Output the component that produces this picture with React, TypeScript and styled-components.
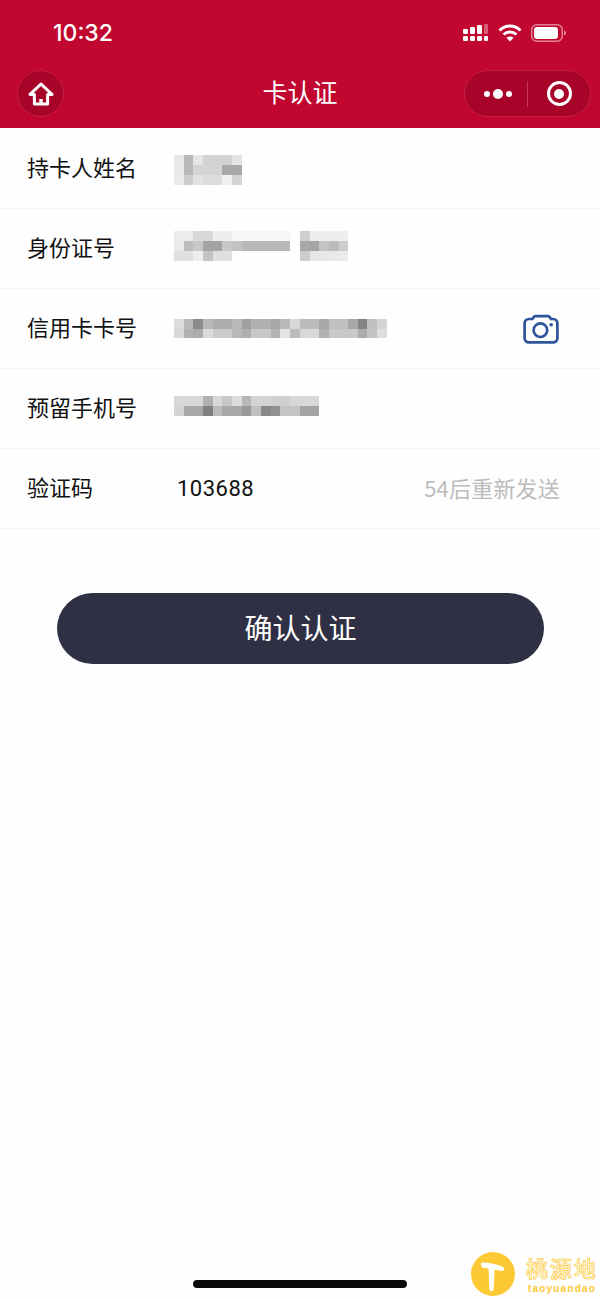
import styled, { createGlobalStyle } from "styled-components";

const GlobalStyle = createGlobalStyle`
  html, body {
    margin: 0;
    padding: 0;
    background: #fff;
  }
  * {
    box-sizing: border-box;
  }
`;

const FONT = `"Noto Sans CJK SC", "Noto Sans", sans-serif`;

type MosaicPart = { cols: string[][] };

// pixelated values, one string per row, two hex digits for each grey cell
const parseRow = (row: string) => row.split(" ").map((v) => `#${v}${v}${v}`);

const nameRows = ["e8 b8 e6 d2 d2 d2 e4", "e8 b8 d4 d4 d4 a8 a8", "ea cc e2 dc dc f0 d4"].map(parseRow);
const idRows = [
  ["ec ec d8 d8 ee ee f6 f6 f6 f6 f6 f6", "d0 ee ee ee ee"],
  ["ea bc c8 a4 a4 c8 c2 b8 b8 b8 b8 b8", "a8 a4 c4 bc cc"],
  ["e0 e0 ee c4 e0 e0 ff ff ff ff ff ff", "cc e6 e6 ea ea"],
];
const cardRows = [
  "dc b8 8c b8 ac ac b8 a0 b0 b0 a8 b8 d8 bc bc a8 c0 c0 a8 84 c0 d4",
  "d8 b0 ac dc cc cc b8 b0 c8 c8 b4 e4 bc d8 d8 b0 c8 c8 c8 ac c4 de",
].map(parseRow);
const phoneRows = [
  "d8 d8 d8 b0 d8 c8 dc b8 d4 d4 d0 d0 d8 d8 d8",
  "d4 a8 a8 80 bc a8 a8 98 c0 88 90 c4 c4 a4 a4",
].map(parseRow);

const fields = [
  { label: "持卡人姓名", parts: [{ cols: nameRows }] as MosaicPart[], nudge: 3 },
  {
    label: "身份证号",
    parts: [
      { cols: idRows.map((r) => parseRow(r[0])) },
      { cols: idRows.map((r) => parseRow(r[1])) },
    ] as MosaicPart[],
    nudge: -5,
  },
  { label: "信用卡卡号", parts: [{ cols: cardRows }] as MosaicPart[], nudge: 0, camera: true },
  { label: "预留手机号", parts: [{ cols: phoneRows }] as MosaicPart[], nudge: -5 },
];

function SignalIcon() {
  return (
    <svg width="26" height="18" viewBox="0 0 26 18" fill="#fff">
      <rect x="0" y="5" width="5" height="5" rx="1.2" />
      <rect x="7" y="3" width="5" height="7" rx="1.2" />
      <rect x="14" y="1" width="5" height="9" rx="1.2" />
      <rect x="21" y="0" width="4" height="10" rx="1" opacity="0.35" />
      <rect x="0" y="12" width="5" height="5" rx="1.2" />
      <rect x="7" y="12" width="5" height="5" rx="1.2" />
      <rect x="14" y="12" width="5" height="5" rx="1.2" />
      <rect x="21" y="12" width="4" height="5" rx="1" />
    </svg>
  );
}

function WifiIcon() {
  return (
    <svg width="24" height="18" viewBox="0 0 24 18" fill="none" stroke="#fff" strokeWidth="3">
      <path d="M1.5 6.5C7.5 0.6 16.5 0.6 22.5 6.5" />
      <path d="M5.5 10.5C9.3 7 14.7 7 18.5 10.5" />
      <path d="M12 17.5L8.4 13.8C10.4 12.2 13.6 12.2 15.6 13.8Z" fill="#fff" stroke="none" />
    </svg>
  );
}

function BatteryIcon() {
  return (
    <svg width="36" height="18" viewBox="0 0 36 18" fill="none">
      <rect x="0.75" y="0.75" width="30.5" height="16.5" rx="5" stroke="#fff" strokeOpacity="0.5" strokeWidth="1.5" />
      <rect x="3" y="3" width="24" height="12" rx="3" fill="#fff" />
      <path d="M33 6.5C34.5 7 35 8 35 9S34.5 11 33 11.5Z" fill="#fff" fillOpacity="0.5" />
    </svg>
  );
}

function HomeIcon() {
  return (
    <svg width="26" height="24" viewBox="0 0 26 24" fill="none" stroke="#fff" strokeWidth="3" strokeLinejoin="round">
      <path d="M13 2L2 12.4H6.4V22H19.6V12.4H24Z" />
      <path d="M13 22V17" strokeWidth="3.4" />
    </svg>
  );
}

function CameraIcon() {
  return (
    <svg width="36" height="30" viewBox="0 0 36 30" fill="none" stroke="#2f559c" strokeWidth="2.7">
      <path d="M6 5H9.4L10.6 3.2C11 2.6 11.6 2.2 12.4 2.2H25C25.8 2.2 26.4 2.6 26.8 3.2L28 5H30C32.6 5 34.4 6.8 34.4 9.4V24C34.4 26.6 32.6 28.4 30 28.4H6C3.4 28.4 1.6 26.6 1.6 24V9.4C1.6 6.8 3.4 5 6 5Z" />
      <circle cx="17.4" cy="16.2" r="6.8" />
      <circle cx="28.2" cy="10.8" r="1.8" fill="#2f559c" stroke="none" />
    </svg>
  );
}

function Mosaic({ parts, nudge }: { parts: MosaicPart[]; nudge: number }) {
  return (
    <MosaicWrap $nudge={nudge}>
      {parts.map((part, i) => (
        <MosaicGrid key={i} $cols={part.cols[0].length}>
          {part.cols.flat().map((c, j) => (
            <MosaicCell key={j} $c={c} />
          ))}
        </MosaicGrid>
      ))}
    </MosaicWrap>
  );
}

export default function App() {
  return (
    <Page>
      <GlobalStyle />
      <Header>
        <StatusBar>
          <Time>10:32</Time>
          <StatusIcons>
            <SignalIcon />
            <WifiIcon />
            <BatteryIcon />
          </StatusIcons>
        </StatusBar>
        <NavBar>
          <HomeButton>
            <HomeIcon />
          </HomeButton>
          <Title>卡认证</Title>
          <Capsule>
            <MoreSide>
              <Dot $size={6} />
              <Dot $size={10} />
              <Dot $size={6} />
            </MoreSide>
            <CapsuleDivider />
            <CloseSide>
              <Target />
            </CloseSide>
          </Capsule>
        </NavBar>
      </Header>

      <Form>
        {fields.map((f) => (
          <Row key={f.label}>
            <Label>{f.label}</Label>
            <Mosaic parts={f.parts} nudge={f.nudge} />
            {f.camera && (
              <CameraSlot>
                <CameraIcon />
              </CameraSlot>
            )}
          </Row>
        ))}
        <Row>
          <Label>验证码</Label>
          <CodeValue>103688</CodeValue>
          <Resend>54后重新发送</Resend>
        </Row>
      </Form>

      <SubmitButton>确认认证</SubmitButton>

      <HomeIndicator />
      <Watermark>
        <WatermarkBadge>
          <svg width="24" height="30" viewBox="0 0 24 30" fill="#fff">
            <path d="M1.5 0.5C8 0.5 16 2 22 5C24 6 23.5 9 21.5 9C19 8.5 16 8 13.5 8C13.5 15 13 22 12.5 27C12.2 30 8.5 30 8.3 27C8 22 8 14 7.5 6.5C5 6 3 6 1.5 5.5C-0.5 4.5 -0.5 1 1.5 0.5Z" />
          </svg>
        </WatermarkBadge>
        <WatermarkText>
          <WatermarkName>桃源地</WatermarkName>
          <WatermarkSub>taoyuandao</WatermarkSub>
        </WatermarkText>
      </Watermark>
    </Page>
  );
}

const Page = styled.div`
  position: relative;
  width: 600px;
  height: 1299px;
  overflow: hidden;
  background: #fefefe;
  font-family: ${FONT};
`;

const Header = styled.header`
  height: 128px;
  background: #c1062f;
  display: flex;
  flex-direction: column;
`;

const StatusBar = styled.div`
  height: 66px;
  display: flex;
  align-items: center;
  justify-content: space-between;
  padding: 0 33px 0 53px;
`;

const Time = styled.span`
  color: #fff;
  font-family: Inter, "Liberation Sans", sans-serif;
  font-size: 23px;
  font-weight: 500;
`;

const StatusIcons = styled.div`
  display: flex;
  align-items: center;
  gap: 9px;
`;

const NavBar = styled.nav`
  flex: 1;
  display: flex;
  align-items: flex-start;
  justify-content: space-between;
  padding: 4px 9px 0 17px;
  position: relative;
`;

const HomeButton = styled.div`
  width: 47px;
  height: 47px;
  border-radius: 50%;
  background: #a8042a;
  border: 1px solid #c91c44;
  display: flex;
  align-items: center;
  justify-content: center;
`;

const Title = styled.h1`
  position: absolute;
  left: 0;
  right: 0;
  top: 6px;
  margin: 0;
  text-align: center;
  color: #fff;
  font-size: 25px;
  line-height: 38px;
  font-weight: 400;
`;

const Capsule = styled.div`
  width: 127px;
  height: 47px;
  border-radius: 24px;
  background: #a8042a;
  border: 1px solid #c91c44;
  display: flex;
  align-items: center;
`;

const MoreSide = styled.div`
  flex: 0 0 62px;
  display: flex;
  align-items: center;
  justify-content: center;
  gap: 3px;
  padding-left: 3px;
`;

const CloseSide = styled.div`
  flex: 1;
  display: flex;
  justify-content: center;
`;

const CapsuleDivider = styled.div`
  width: 1px;
  height: 26px;
  background: #c8385a;
`;

const Dot = styled.span<{ $size: number }>`
  width: ${(p) => p.$size}px;
  height: ${(p) => p.$size}px;
  border-radius: 50%;
  background: #fff;
`;

const Target = styled.span`
  width: 25px;
  height: 25px;
  border-radius: 50%;
  border: 3px solid #fff;
  display: flex;
  align-items: center;
  justify-content: center;

  &::after {
    content: "";
    width: 10px;
    height: 10px;
    border-radius: 50%;
    background: #fff;
  }
`;

const Form = styled.section`
  display: flex;
  flex-direction: column;
  padding-top: 1px;
`;

const Row = styled.div`
  height: 80px;
  padding: 0 40px 0 27px;
  display: flex;
  align-items: center;
  border-bottom: 1px solid #f6f6f6;
`;

const Label = styled.span`
  width: 147px;
  flex-shrink: 0;
  padding-bottom: 5px;
  color: #111;
  font-size: 22px;
`;

const MosaicWrap = styled.div<{ $nudge: number }>`
  display: flex;
  align-items: center;
  gap: 10px;
  margin-top: ${(p) => Math.max(p.$nudge, 0)}px;
  margin-bottom: ${(p) => Math.max(-p.$nudge, 0)}px;
  filter: blur(0.5px);
`;

const MosaicGrid = styled.div<{ $cols: number }>`
  display: grid;
  grid-template-columns: repeat(${(p) => p.$cols}, 9.68px);
  grid-auto-rows: 9.68px;
`;

const MosaicCell = styled.div<{ $c: string }>`
  background: ${(p) => p.$c};
`;

const CameraSlot = styled.div`
  margin-left: auto;
  margin-right: 1px;
  display: flex;
`;

const CodeValue = styled.span`
  margin-left: 3px;
  color: #111;
  font-family: Roboto, sans-serif;
  font-size: 22px;
  letter-spacing: 0.5px;
`;

const Resend = styled.span`
  margin-left: auto;
  padding-bottom: 3px;
  color: #bcbcbc;
  font-size: 22px;
  letter-spacing: 0.2px;
`;

const SubmitButton = styled.button`
  display: block;
  width: 487px;
  height: 71px;
  margin: 64px 0 0 57px;
  padding: 0 0 3px;
  border: none;
  border-radius: 36px;
  background: #2f3044;
  color: #fff;
  font-family: ${FONT};
  font-size: 28px;
`;

const HomeIndicator = styled.div`
  position: absolute;
  left: 193px;
  bottom: 11px;
  width: 214px;
  height: 8px;
  border-radius: 4px;
  background: #0a0a0a;
`;

const Watermark = styled.div`
  position: absolute;
  left: 471px;
  top: 1252px;
  display: flex;
  align-items: center;
  gap: 11px;
`;

const WatermarkBadge = styled.div`
  width: 44px;
  height: 44px;
  border-radius: 50%;
  background: #fdc935;
  display: flex;
  align-items: center;
  justify-content: center;
  padding-top: 6px;
`;

const WatermarkText = styled.div`
  display: flex;
  flex-direction: column;
  align-items: center;
`;

const WatermarkName = styled.span`
  color: #fffbe8;
  -webkit-text-stroke: 0.7px #fdc935;
  font-size: 22px;
  line-height: 26px;
  letter-spacing: 2px;
  font-weight: 500;
`;

const WatermarkSub = styled.span`
  margin-top: 3px;
  color: #fdc935;
  font-family: "Liberation Sans", sans-serif;
  font-size: 10px;
  line-height: 12px;
  letter-spacing: 1.2px;
  font-weight: 700;
`;
